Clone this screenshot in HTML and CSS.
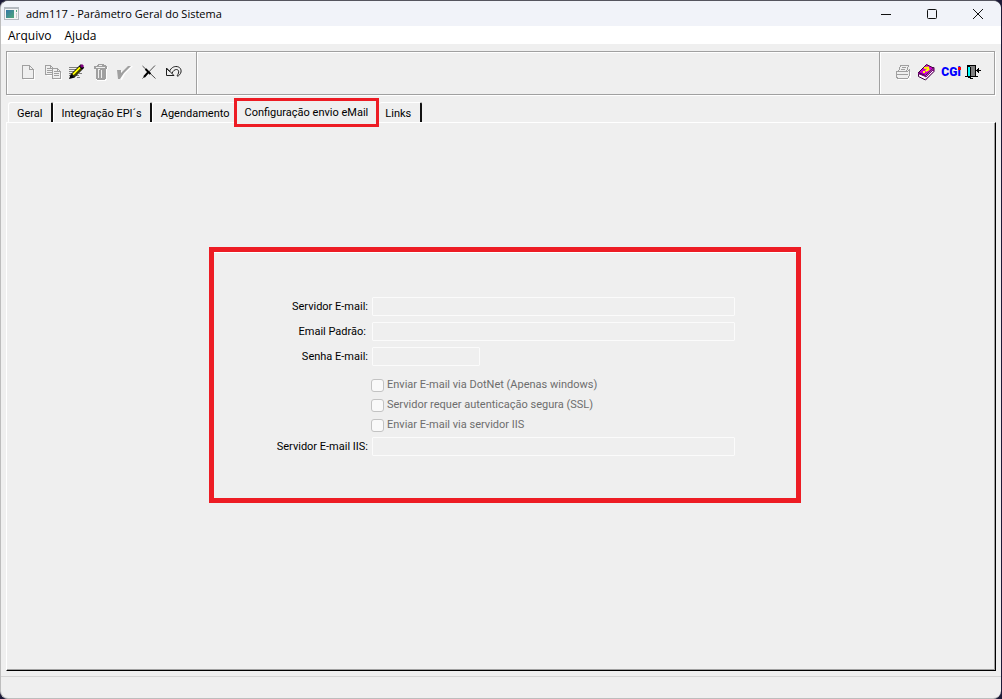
FILE: index.html
```html
<!DOCTYPE html>
<html lang="pt-BR">
<head>
<meta charset="utf-8">
<title>adm117 - Parâmetro Geral do Sistema</title>
<link rel="stylesheet" href="styles.css">
</head>
<body>
<div class="window">
  <header class="titlebar">
    <svg class="app-icon" width="16" height="16" viewBox="0 0 16 16" shape-rendering="crispEdges" aria-hidden="true"><defs><linearGradient id="app" x1="0" y1="0" x2="1" y2="1"><stop offset="0" stop-color="#3476a8"/><stop offset="1" stop-color="#4fa878"/></linearGradient></defs><path fill="#b4b9bf" d="M0 1h15v13H0z"/><path fill="#f5f5f5" d="M1 3h13v10H1z"/><path fill="url(#app)" d="M2 4h8v8H2z"/><path fill="#56a57e" d="M12 4h1v2h-1z"/><path fill="#c8ccd0" d="M12 7h1v5h-1z"/></svg>
    <h1 class="title">adm117 - Parâmetro Geral do Sistema</h1>
    <div class="window-controls">
      <button class="window-button" aria-label="Minimizar"><svg width="12" height="12" viewBox="0 0 12 12"><path d="M1 6.500h10"/></svg></button>
      <button class="window-button" aria-label="Maximizar"><svg width="12" height="12" viewBox="0 0 12 12"><rect x="1.500" y="1.500" width="9" height="9" rx="1"/></svg></button>
      <button class="window-button" aria-label="Fechar"><svg width="12" height="12" viewBox="0 0 12 12"><path d="M1 1l10 10M11 1L1 11"/></svg></button>
    </div>
  </header>
  <nav class="menubar">
    <button class="menu">Arquivo</button>
    <button class="menu">Ajuda</button>
  </nav>
  <div class="toolbar">
    <div class="tools">
      <button class="tool" aria-label="Novo"><svg width="24" height="24" viewBox="0 0 24 24" shape-rendering="crispEdges"><path fill="none" stroke="#fff" d="M5.500 19.500h11v-10"/><path fill="none" stroke="#a0a0a0" d="M4.500 5.500h7l4 4v9h-11zM11.500 5.500v4h4"/></svg></button>
      <button class="tool" aria-label="Copiar"><svg width="24" height="24" viewBox="0 0 24 24" shape-rendering="crispEdges"><path fill="none" stroke="#fff" d="M4.500 15.500h6M11.500 19.500h8v-7"/><path fill="#efefef" stroke="#a0a0a0" d="M3.500 5.500h5l3 3v6h-8zM8.500 5.500v3h3M5 8.500h3M5 10.500h5M5 12.500h5"/><path fill="#efefef" stroke="#a0a0a0" d="M10.500 8.500h5l3 3v7h-8zM15.500 8.500v3h3M12 11.500h3M12 13.500h5M12 15.500h5"/></svg></button>
      <button class="tool" aria-label="Editar"><svg width="24" height="24" viewBox="0 0 24 24"><path stroke="#808080" d="M3 7.500h9M3 9.500h8M3 11.500h6M3 13.500h5M3 15.500h4M10 15.500h3M13 13.500h3M11 17.500h3"/><path stroke="#000" stroke-width="5" d="M7 15.500l9.500-9.500"/><path fill="#000" d="M5 13.500l4 4-6 1.500z"/><path stroke="#ff0" stroke-width="2" d="M7 14.500l7-7"/><path stroke="#808000" d="M8.500 16l7-7"/><path stroke="#800080" stroke-width="3" d="M15 7l2-2"/></svg></button>
      <button class="tool" aria-label="Excluir"><svg width="24" height="24" viewBox="0 0 24 24" shape-rendering="crispEdges"><path fill="#fff" d="M5 7h13v2h-1v11h-1v1H7v-1H6V9H5z"/><path fill="#a0a0a0" d="M8 4h6v1h2v1h1v3h-1v10h-1v1H7v-1H6V9H4V6h3V5h1z"/><path fill="#efefef" d="M6 7h9v1H6zM9 5h3v1H9zM8 9h2v1H9v8H8zM11 10h1v8h-1z"/></svg></button>
      <button class="tool" aria-label="Confirmar"><svg width="24" height="24" viewBox="0 0 24 24"><path fill="#fff" d="M4 13l3-3 2 3 8-7h2l-8 8-3 6H7z"/><path fill="#a0a0a0" d="M3 10h4v3l7-7h3l-7 7-4 6H4z"/></svg></button>
      <button class="tool" aria-label="Cancelar"><svg width="24" height="24" viewBox="0 0 24 24"><path fill="none" stroke="#505050" stroke-width="1" d="M4.500 6l13 12.500M17 5.500L4.500 18.500"/><path stroke="#000" stroke-width="2" d="M7.500 9l5 5M6 17l4-4.500"/></svg></button>
      <button class="tool" aria-label="Desfazer"><svg width="24" height="24" viewBox="0 0 24 24"><path fill="none" stroke="#202020" d="M4.500 8v7.500H12zM5 9l2.500 2.500C9 7.500 12 6.500 14 6.500c4 0 5.500 3 5 5.500-.300 2-2 3.500-3.500 4.500M10 13.500c1-3 3-4 4.500-4 2 0 2.500 2 2 3.500-.200 1-1 2-1.500 3"/></svg></button>
    </div>
    <div class="tool-space"></div>
    <div class="tools tools-end">
      <button class="tool" aria-label="Imprimir"><svg width="24" height="24" viewBox="0 0 24 24" shape-rendering="crispEdges"><path fill="none" stroke="#fff" d="M7 19.500h10.500v-2h2v-6"/><path fill="#efefef" stroke="#a0a0a0" d="M9.500 5.500h8l-2 6h-8zM5.500 11.500h11l2-2v6l-2 3h-10l-1-2zM6 14.500h11M11 7.500h4M10 9.500h4"/></svg></button>
      <button class="tool" aria-label="Ajuda do sistema"><svg width="24" height="24" viewBox="0 0 24 24"><path fill="#fff" stroke="#400040" d="M3.500 12.500v4l7 3.500 8.500-8.500v-4z"/><path fill="#800080" d="M3 12l8 4 8-8v3l-8 8-1-2-7-3z"/><path stroke="#fff" fill="none" d="M5 15.500l6 2.500 7-7"/><path fill="#d000d0" stroke="#400040" d="M11.500 4.500l7 3.500-8 7.500-7-3z"/><path stroke="#ff0" stroke-width="2" fill="none" d="M9 8l4-.500.500 2-3 1.500M8 12h2"/></svg></button>
      <button class="tool tool-text">CG<span class="cgi-i">i</span></button>
      <button class="tool" aria-label="Sair"><svg width="24" height="24" viewBox="0 0 24 24" shape-rendering="crispEdges"><path fill="#808080" stroke="#000" d="M4.500 5.500h8v11h-8z"/><path fill="#0ff" stroke="#000" d="M4.500 5.500l3 2v11l-3-2z"/><path stroke="#000" d="M2 16.500h13M8 18.500h2"/><path fill="#000" d="M13 10h1V9h1V8h1v2h2v1h-2v2h-1v-1h-1v-1h-1z"/></svg></button>
    </div>
  </div>
  <main class="content">
    <div class="tabs" role="tablist">
      <button class="tab" role="tab">Geral</button>
      <button class="tab" role="tab">Integração EPI´s</button>
      <button class="tab tab-before" role="tab">Agendamento</button>
      <button class="tab tab-selected" role="tab" aria-selected="true">Configuração envio eMail</button>
      <button class="tab tab-last" role="tab">Links</button>
    </div>
    <section class="panel" role="tabpanel">
      <form class="settings">
        <label class="label" for="server">Servidor E-mail:</label>
        <input class="field" id="server" type="text" disabled>
        <label class="label label-short" for="sender">Email Padrão:</label>
        <input class="field" id="sender" type="text" disabled>
        <label class="label" for="password">Senha E-mail:</label>
        <input class="field field-short" id="password" type="password" disabled>
        <div class="options">
          <label class="option"><input class="check" type="checkbox" disabled>Enviar E-mail via DotNet (Apenas windows)</label>
          <label class="option"><input class="check" type="checkbox" disabled>Servidor requer autenticação segura (SSL)</label>
          <label class="option"><input class="check" type="checkbox" disabled>Enviar E-mail via servidor IIS</label>
        </div>
        <label class="label" for="iis">Servidor E-mail IIS:</label>
        <input class="field" id="iis" type="text" disabled>
      </form>
    </section>
  </main>
  <footer class="statusbar"></footer>
</div>
</body>
</html>
```

FILE: styles.css
```css
* { box-sizing: border-box; }
body {
  margin: 0;
  background: #1d1b38;
  color: #000;
  font: 11px/16px Roboto, sans-serif;
}
button {
  margin: 0;
  padding: 0;
  border: 0;
  background: none;
  color: inherit;
  font: inherit;
}
.window {
  display: flex;
  flex-direction: column;
  min-height: 100vh;
  margin-right: 1px;
  border: 1px solid #bdbdbd;
  border-top-color: #55555f;
  border-right: 0;
  border-radius: 8px;
  background: #efefef;
  overflow: hidden;
}
.titlebar {
  display: flex;
  align-items: center;
  height: 25px;
  padding-left: 3px;
  background: #f1f3f9;
}
.title {
  flex: 1;
  margin: 0 0 0 6px;
  font: 11px/16px "Open Sans", sans-serif;
}
.window-controls { display: flex; }
.window-button {
  display: flex;
  align-items: center;
  justify-content: center;
  width: 46px;
  height: 25px;
}
.window-button svg { fill: none; stroke: #111; }
.menubar {
  display: flex;
  gap: 13px;
  height: 18px;
  padding-left: 7px;
  background: #fff;
  font: 12px/20px "Open Sans", sans-serif;
}
.toolbar {
  display: flex;
  height: 44px;
  margin: 7px 6px 0 5px;
  border: 1px solid #a0a0a0;
  box-shadow: inset 1px 1px #fff, 1px 1px #fff;
}
.tools {
  display: flex;
  align-items: flex-start;
  padding: 8px 10px 0 11px;
  border-right: 1px solid #a0a0a0;
}
.tool-space {
  flex: 1;
  border-right: 1px solid #a0a0a0;
  box-shadow: inset 1px 1px #fff;
}
.tools-end {
  padding: 8px 7px 0 11px;
  border-right: 0;
  box-shadow: inset 1px 1px #fff;
}
.tool {
  display: block;
  width: 24px;
  height: 24px;
}
.tool svg { display: block; }
.tool-text {
  color: #00f;
  font: 900 12px/24px Roboto, sans-serif;
}
.cgi-i { position: relative; }
.cgi-i::after {
  content: "";
  position: absolute;
  top: 2px;
  right: 0;
  width: 3px;
  height: 3px;
  background: #f00;
}
.content {
  display: flex;
  flex: 1;
  flex-direction: column;
  margin: 7px 5px 5px;
}
.tabs {
  display: flex;
  align-items: flex-end;
  padding-left: 2px;
}
.tab {
  height: 20px;
  padding: 2px 8px 0;
  border-top: 1px solid #fff;
  border-left: 1px solid #fff;
  border-right: 2px solid #111;
  border-radius: 3px 2px 0 0;
  white-space: nowrap;
}
.tab-before {
  padding-right: 5px;
  border-right: 0;
}
.tab-selected {
  z-index: 1;
  height: 29px;
  margin: -5px 0 -5px -1px;
  padding: 0 8px;
  border: 3px solid #ed1c24;
  border-radius: 0;
  background: #efefef;
}
.tab-last {
  padding: 2px 9px 0 6px;
  border-left: 0;
}
.panel {
  flex: 1;
  padding: 124px 0 124px 8px;
  border: 1px solid #fff;
  border-right: 1px solid #000;
  border-bottom: 1px solid #000;
  box-shadow: inset -1px -1px #a0a0a0;
}
.settings {
  display: grid;
  grid-template-columns: 154px 363px;
  column-gap: 4px;
  row-gap: 6px;
  align-items: center;
  width: 592px;
  max-width: 100%;
  margin: 0 auto;
  padding: 45px 5px 42px 0;
  border: 5px solid #ed1c24;
  box-shadow: inset 0 1px #fff;
}
.label { text-align: right; }
.label-short { padding-right: 2px; }
.field {
  width: 100%;
  height: 19px;
  border: 1px solid #fbfbfb;
  border-radius: 1px;
  background: #efefef;
  font: inherit;
}
.field-short { width: 108px; }
.options {
  display: grid;
  grid-column: 2;
  gap: 4px;
  margin: 5px 0 -2px -1px;
  color: #6d6d6d;
}
.option {
  display: flex;
  align-items: center;
  gap: 3px;
}
.check {
  appearance: none;
  width: 13px;
  height: 13px;
  margin: 0;
  border: 1px solid #c3c3c3;
  border-radius: 3px;
  background: #f9f9f9;
}
.statusbar {
  height: 22px;
  border-top: 1px solid #d4d4d4;
}
```
